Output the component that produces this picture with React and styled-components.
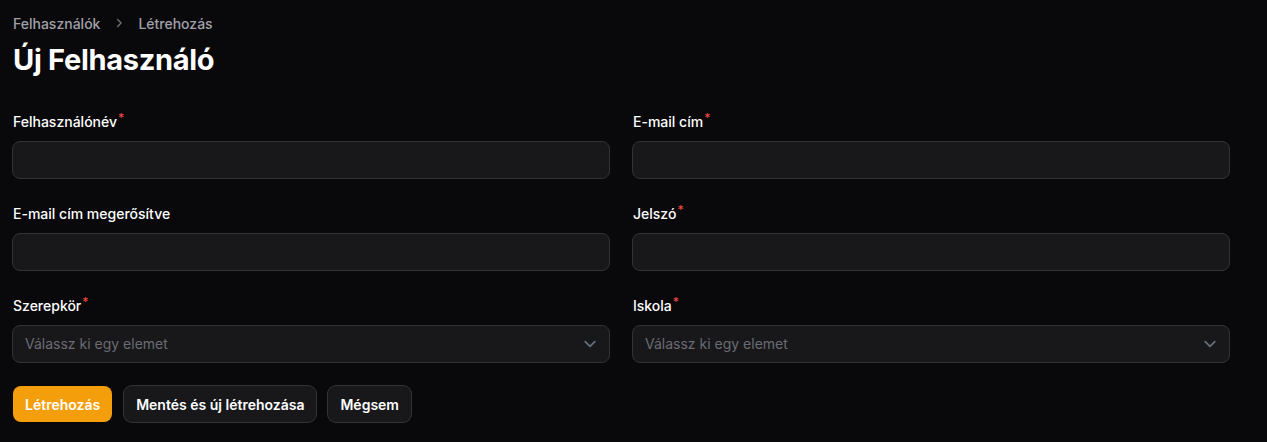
import React from "react";
import styled, { createGlobalStyle } from "styled-components";

const Global = createGlobalStyle`
  html, body { margin: 0; padding: 0; background: #09090b; }
  body { font-family: Inter, "Noto Sans", sans-serif; color: #fff; -webkit-font-smoothing: antialiased; }
  * { box-sizing: border-box; }
`;

const Page = styled.main`
  width: 1267px;
  min-height: 442px;
  padding: 13px 37px 0 12px;
  display: flex;
  flex-direction: column;
`;

const Breadcrumbs = styled.nav`
  display: flex;
  align-items: center;
  gap: 12px;
  height: 20px;
  font-size: 14px;
  font-weight: 500;
  color: #a1a1aa;
  padding-left: 1px;
`;

const Title = styled.h1`
  margin: 9px 0 0 1px;
  font-size: 29px;
  line-height: 36px;
  font-weight: 700;
  letter-spacing: -0.3px;
  color: #fff;
`;

const Form = styled.form`
  margin-top: 33px;
  display: grid;
  grid-template-columns: 1fr 1fr;
  column-gap: 22px;
  row-gap: 24px;
`;

const Field = styled.div`
  display: flex;
  flex-direction: column;
  gap: 8px;
`;

const Label = styled.label`
  font-size: 14px;
  line-height: 22px;
  font-weight: 500;
  color: #fff;
  padding-left: 1px;
`;

const Req = styled.sup`
  color: #ef4444;
  font-weight: 500;
  font-size: 12px;
  margin-left: 1px;
  vertical-align: 5px;
  line-height: 0;
`;

const Input = styled.div`
  height: 38px;
  border-radius: 8px;
  background: #18181b;
  border: 1px solid #333337;
  display: flex;
  align-items: center;
  justify-content: space-between;
  padding: 0 9px 1px 12px;
  font-size: 14px;
  color: #6b6b73;
`;

const Actions = styled.div`
  margin-top: 23px;
  display: flex;
  gap: 12px;
  padding-left: 1px;
`;

const Button = styled.button`
  height: 36px;
  padding: 0 12px;
  border-radius: 8px;
  border: none;
  font-family: Inter, "Noto Sans", sans-serif;
  font-size: 14px;
  font-weight: 600;
  color: #fff;
  background: ${(p) => (p.$primary ? "#f59e0b" : "#18181b")};
  box-shadow: ${(p) => (p.$primary ? "none" : "0 0 0 1px #333337")};
`;

const Chevron = () => (
  <svg width="20" height="20" viewBox="0 0 20 20" fill="none" stroke="#6b7280" strokeWidth="1.6" strokeLinecap="round" strokeLinejoin="round">
    <path d="M5.2 7.6L10 12.4l4.8-4.8" />
  </svg>
);

const Sep = () => (
  <svg width="14" height="14" viewBox="0 0 20 20" fill="none" stroke="#71717a" strokeWidth="1.8" strokeLinecap="round" strokeLinejoin="round">
    <path d="M8 5l5 5-5 5" />
  </svg>
);

const F = ({ label, req, select }) => (
  <Field>
    <Label>
      {label}
      {req && <Req>*</Req>}
    </Label>
    <Input>
      {select && (
        <>
          <span>Válassz ki egy elemet</span>
          <Chevron />
        </>
      )}
    </Input>
  </Field>
);

export default function App() {
  return (
    <Page>
      <Global />
      <Breadcrumbs>
        <span>Felhasználók</span>
        <Sep />
        <span>Létrehozás</span>
      </Breadcrumbs>
      <Title>Új Felhasználó</Title>
      <Form>
        <F label="Felhasználónév" req />
        <F label="E-mail cím" req />
        <F label="E-mail cím megerősítve" />
        <F label="Jelszó" req />
        <F label="Szerepkör" req select />
        <F label="Iskola" req select />
      </Form>
      <Actions>
        <Button $primary>Létrehozás</Button>
        <Button>Mentés és új létrehozása</Button>
        <Button>Mégsem</Button>
      </Actions>
    </Page>
  );
}
